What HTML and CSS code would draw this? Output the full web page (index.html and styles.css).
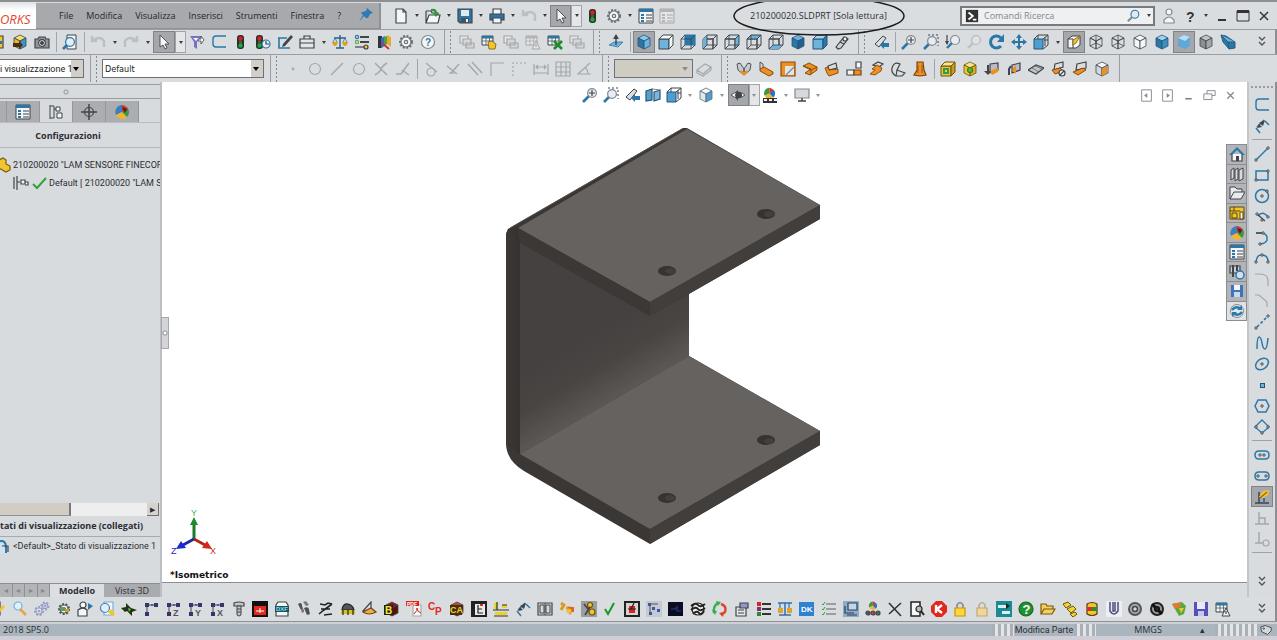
FILE: index.html
```
<!DOCTYPE html>
<html lang="it">
<head>
    <meta charset="UTF-8">
    <meta name="viewport" content="width=device-width, initial-scale=1.0">
    <title>210200020.SLDPRT</title>
    <link rel="stylesheet" href="styles.css">
</head>
<body>

    <!-- Title bar -->
    <header class="titlebar">
        <div class="logo">ORKS</div>
        <nav class="menu">
            <a href="#">File</a>
            <a href="#">Modifica</a>
            <a href="#">Visualizza</a>
            <a href="#">Inserisci</a>
            <a href="#">Strumenti</a>
            <a href="#">Finestra</a>
            <a href="#">?</a>
            <span class="tools" data-icons="pin"></span>
        </nav>
        <div class="tools quick" data-icons="new v open v save v print v undo- v cursor* v* lights gear v list list-"></div>
        <h1 class="doc-title">210200020.SLDPRT [Sola lettura]
            <svg class="doc-ring" viewBox="0 0 174 42"><ellipse cx="87" cy="21" rx="85" ry="19"/></svg>
        </h1>
        <div class="search">
            <svg viewBox="0 0 16 16"><path d="M1 1h14v14H1z" fill="#333"/><path d="M4 4l5 4-5 4M9 12h4" stroke="#fff" stroke-width="2" fill="none"/></svg>
            <input type="text" aria-label="Comandi Ricerca" placeholder="Comandi Ricerca">
            <div class="tools" data-icons="lens v"></div>
        </div>
        <div class="tools window" data-icons="person help2 v min max close"></div>
    </header>

    <!-- Standard and view toolbars -->
    <div class="toolbar">
        <div class="tools first" data-icons="part assembly camera | preview | undo- v redo- v cursor* v* filter sketch lights lights2 pen case v scale options colors gear help"></div>
        <div class="tools group" data-icons="stack- table stack- tablewarn- tablex stack-"></div>
        <div class="tools group" data-icons="normal | iso* vfront vback vleft vright vtop vbottom viso2 vfull wrench"></div>
        <div class="tools group" data-icons="prev | zoomfit zoomarea zoomdown lens- rotate pan cubeview v section* wire wire hidden shaded shaded2* edges persp"></div>
        <div class="tools more" data-icons="chev"></div>
    </div>

    <!-- Configuration, sketch relations and sheet metal toolbars -->
    <div class="toolbar lower">
        <div class="combo first-combo"><select aria-label="Stato di visualizzazione"><option>i visualizzazione 1</option></select></div>
        <div class="tools group"></div>
        <div class="combo config-combo"><select aria-label="Configurazione"><option>Default</option></select></div>
        <div class="tools group relations" data-icons="dot- circ- line- circ- cross- angle- | tangent- perp- para- corner- dots- dim- grid- tri-"></div>
        <div class="tools group"></div>
        <div class="combo off-combo"><select aria-label="Layer" disabled><option></option></select></div>
        <div class="tools" data-icons="eraser-"></div>
        <div class="tools group sheet" data-icons="sm1 sm2 sm3 sm4 sm5 sm6 sm7 sm8 sm9 | smg1 smg2 smd1 smd2 smflat smno smh smbox"></div>
    </div>

    <main class="workspace">
        <!-- Left panel -->
        <aside class="panel">
            <div class="panel-grip"></div>
            <div class="panel-tabs">
                <button class="cut" aria-label="Albero"></button>
                <button aria-label="Proprietà" data-icon="list"></button>
                <button class="active" aria-label="Configurazioni" data-icon="config"></button>
                <button aria-label="Quote" data-icon="target"></button>
                <button aria-label="Aspetti" data-icon="ball"></button>
            </div>
            <h2>Configurazioni</h2>
            <ul class="tree">
                <li><span data-icon="yellowpart"></span>210200020 "LAM SENSORE FINECORS</li>
                <li class="child"><span data-icon="confnode"></span><span data-icon="tick"></span>Default [ 210200020 "LAM S</li>
            </ul>
            <div class="scroll"><div class="thumb"></div><button aria-label="Avanti">▶</button></div>
            <h3>tati di visualizzazione (collegati)</h3>
            <p class="state"><span data-icon="stateicon"></span>&lt;Default&gt;_Stato di visualizzazione 1</p>
            <div class="sheets">
                <div class="pager"><i>◂</i><i>◂</i><i>▸</i><i>▸</i></div>
                <button class="active">Modello</button>
                <button>Viste 3D</button>
            </div>
        </aside>

        <!-- Graphics area -->
        <section class="view">
            <button class="handle" aria-label="Comprimi"></button>
            <div class="tools heads-up" data-icons="zoomfit zoomarea prev sectview cubeview v wirecube v eye* v* scene v monitor v"></div>
            <div class="tools doc-buttons" data-icons="dockl dockr min restore close"></div>

            <svg class="model" viewBox="0 0 350 450">
                <defs>
                    <linearGradient id="back" gradientUnits="userSpaceOnUse" x1="80" y1="235" x2="115" y2="295">
                        <stop offset="0" stop-color="#454140"/>
                        <stop offset="0.5" stop-color="#484543"/>
                        <stop offset="1" stop-color="#5b5856"/>
                    </linearGradient>
                    <linearGradient id="left" x1="0" x2="1">
                        <stop offset="0" stop-color="#3b3836"/>
                        <stop offset="1" stop-color="#34312f"/>
                    </linearGradient>
                </defs>
                <path d="M16 124l2-5L193 18l4 0 133 77v14l-131 75v62l131 75v14L160 434 34 361Q16 350 16 333z" fill="#3a3735"/>
                <path d="M30 130l130 76 39-22v62L30 344z" fill="url(#back)"/>
                <path d="M16 124l2-5 9-2 3 14v213l-14-9z" fill="url(#left)"/>
                <path d="M28 118L197 19l133 76-170 97z" fill="#65625f"/>
                <path d="M20 118L192 19" stroke="#56524f" fill="none"/>
                <path d="M28 118l132 74v14L30 133z" fill="#3c3836"/>
                <path d="M160 192L330 95v14l-170 97z" fill="#423e3c"/>
                <path d="M30 344l169-98 131 75-170 98z" fill="#65625f"/>
                <path d="M160 419l170-98v14l-170 99z" fill="#423e3c"/>
                <g fill="#37332f">
                    <ellipse cx="276" cy="104" rx="9" ry="5"/>
                    <ellipse cx="177" cy="161" rx="9" ry="5"/>
                    <ellipse cx="276" cy="330" rx="9" ry="5"/>
                    <ellipse cx="177" cy="388" rx="9" ry="5"/>
                </g>
                <g fill="#433f3c">
                    <ellipse cx="279" cy="104" rx="5" ry="3"/>
                    <ellipse cx="180" cy="161" rx="5" ry="3"/>
                    <ellipse cx="279" cy="331" rx="5" ry="3"/>
                    <ellipse cx="180" cy="388" rx="5" ry="3"/>
                </g>
            </svg>

            <div class="triad">
                <svg viewBox="0 0 50 48">
                    <path d="M24 30V14" stroke="#1c7a28" stroke-width="3"/>
                    <path d="M24 8l-4 8h8z" fill="#1f8a2c"/>
                    <path d="M24 30l-11 6" stroke="#1b2aa8" stroke-width="3"/>
                    <path d="M6 40l5-8 5 7z" fill="#1b2ad0"/>
                    <path d="M24 30l11 6" stroke="#b3261b" stroke-width="3"/>
                    <path d="M42 40l-5-8-5 7z" fill="#d0281b"/>
                    <text x="21" y="7" fill="#4fb055">Y</text>
                    <text x="1" y="45" fill="#1b2aa8">Z</text>
                    <text x="40" y="45" fill="#d0281b">X</text>
                </svg>
                <p>*Isometrico</p>
            </div>

            <div class="task-pane" data-icons="home library folder palette ball list forum floppy refresh"></div>
        </section>

        <!-- Sketch toolbar -->
        <aside class="tools sketchbar" data-icons="sketch smartdim | line2 rect circle2 slotarc arc arc3 fillet- fillet2- dashline spline ellipse point polygon diamond | slot slot2 snap* rel1- rel2- | chev"></aside>
    </main>

    <!-- Macro toolbar -->
    <div class="toolbar macros">
        <div class="tools" data-icons="docpen magpen gears gears2 man docmag plane3 axis axisz axisy axisx screw redbox dxf feet tools2 hat disk bbox pdf cp cbox tree2 yline smartdim book arrowy chain check redchip nodes screen zebra recycle props rgblist scale2 dk checklist pc molecule xbig docfind stop lock lock2 teal qgreen folder2 yblocks barrel uclip ring ring2 shield floppy2 tablewarn"></div>
        <div class="tools more" data-icons="chev"></div>
    </div>

    <footer class="status">
        <span class="version">2018 SP5.0</span>
        <span class="ridge"></span>
        <span class="mode">Modifica Parte</span>
        <span class="ridge"></span>
        <span class="units">MMGS</span>
        <span class="up">▴</span>
        <span class="ridge wide"></span>
        <span data-icon="tag"></span>
    </footer>

    <script src="toolbars.js"></script>
</body>
</html>
```

FILE: styles.css
```
/* General Styles */
* {
    box-sizing: border-box;
}

body {
    margin: 0;
    height: 100vh;
    display: flex;
    flex-direction: column;
    overflow: hidden;
    font-family: "Open Sans", "Noto Sans", sans-serif;
    font-size: 9px;
    color: #2c2e33;
    background: #dadde0;
    border-top: 2px solid #8e8f93;
}

button {
    font: inherit;
    color: inherit;
    border: 0;
    padding: 0;
    background: none;
}

h1, h2, h3, p, ul {
    margin: 0;
    padding: 0;
    font-size: inherit;
    font-weight: normal;
    list-style: none;
}

svg {
    display: block;
    width: 16px;
    height: 16px;
}

/* Icon groups */
.tools {
    display: flex;
    align-items: center;
    flex: none;
}

.tool {
    width: 22px;
    height: 22px;
    flex: none;
    display: flex;
    align-items: center;
    justify-content: center;
}

.tool.pressed {
    background: #a5a7aa;
    border: 1px solid #808286;
}

.tool.off {
    opacity: 0.35;
    filter: grayscale(1);
}

.drop {
    width: 11px;
    height: 22px;
    display: flex;
    align-items: center;
    justify-content: center;
}

.drop::before {
    content: "";
    border: 2px solid transparent;
    border-top: 3px solid #3a3c40;
    border-bottom: 0;
}

.drop.pressed {
    border: 1px solid #a2a4a8;
    background: #e4e6e8;
}

.sep {
    width: 6px;
    height: 20px;
    background: linear-gradient(#a3a5a8, #a3a5a8) center / 1px 100% no-repeat;
}

/* Title bar */
.titlebar {
    display: flex;
    align-items: center;
    height: 27px;
    flex: none;
}

.logo {
    width: 36px;
    height: 27px;
    flex: none;
    display: flex;
    align-items: center;
    padding-top: 6px;
    background: linear-gradient(#dfe1e3, #fff 30%);
    color: #e2452f;
    font-size: 13px;
    font-style: italic;
}

.menu {
    display: flex;
    align-items: center;
    gap: 13px;
    width: 345px;
    height: 26px;
    flex: none;
    padding-left: 23px;
    background: #a8a9ad;
    border-right: 2px solid #8f9094;
    border-bottom: 1px solid #909195;
}

.menu a {
    color: #25262b;
    text-decoration: none;
}

.menu .tools {
    margin-left: auto;
    padding-right: 2px;
}

.quick {
    margin-left: 9px;
}

.quick .tool {
    width: 21px;
}

.doc-title {
    position: relative;
    margin: 0 auto;
}

.doc-ring {
    position: absolute;
    left: 50%;
    top: 50%;
    width: 174px;
    height: 42px;
    transform: translate(-50%, -50%);
    fill: none;
    stroke: #1c1c1e;
    stroke-width: 1.5px;
    z-index: 5;
}

.search {
    display: flex;
    align-items: center;
    width: 195px;
    height: 20px;
    flex: none;
    padding-left: 3px;
    background: #eef0f1;
    border: 2px solid #77797d;
}

.search svg {
    width: 14px;
    height: 14px;
}

.search input {
    flex: 1;
    min-width: 0;
    border: 0;
    padding: 0 5px;
    background: none;
    font: inherit;
    outline: none;
}

.search input::placeholder {
    color: #85878b;
}

.search .drop {
    width: 8px;
}

.window {
    padding: 0 3px;
}

.window .tool {
    width: 21px;
}

/* Toolbars */
.toolbar {
    display: flex;
    align-items: center;
    height: 25px;
    flex: none;
    border-top: 1px solid #9b9da1;
    border-right: 2px solid #8c8e93;
}

.toolbar .first {
    margin-left: -13px;
}

.group {
    height: 100%;
    border-left: 1px solid #9b9da1;
    margin-left: 5px;
    padding-left: 11px;
    background: radial-gradient(circle, #85878c 1px, transparent 1px) 4px 0 / 3px 4px repeat-y;
}

.more {
    margin-left: auto;
    padding-right: 2px;
}

.lower {
    height: 28px;
    border-right: 0;
}

.lower .group {
    margin-left: 6px;
}

.lower .sheet {
    border-right: 1px solid #9b9da1;
    padding-right: 6px;
}

.combo {
    position: relative;
    height: 19px;
    flex: none;
    border: 1px solid #6e7074;
    background: #fff;
}

.combo::after {
    content: "";
    position: absolute;
    right: 4px;
    top: 7px;
    border: 3px solid transparent;
    border-top: 4px solid #000;
    border-bottom: 0;
}

.combo select {
    appearance: none;
    width: 100%;
    height: 17px;
    border: 0;
    border-radius: 0;
    padding: 0 14px 0 2px;
    font-family: "DejaVu Sans Condensed", "DejaVu Sans", sans-serif;
    font-size: 9px;
    color: #222;
    background: linear-gradient(#d2cfc8, #d2cfc8) right / 12px 100% no-repeat #fff;
}

.first-combo {
    width: 84px;
    border-left: 0;
}

.first-combo select {
    padding: 0 12px 0 0;
    font-family: Roboto, sans-serif;
}

.config-combo {
    width: 162px;
}

.off-combo {
    width: 79px;
}

.combo select:disabled {
    background-color: #cfccc2;
    opacity: 1;
}

.off-combo::after {
    border-top-color: #8f8d87;
}

/* Workspace */
.workspace {
    flex: 1;
    min-height: 0;
    display: flex;
}

.panel {
    width: 162px;
    flex: none;
    display: flex;
    flex-direction: column;
    overflow: hidden;
    white-space: nowrap;
    border-right: 2px solid #bcbec2;
    background: #d8dbde;
}

.panel-grip {
    height: 15px;
    flex: none;
    margin-top: 2px;
    border-top: 1px solid #999b9f;
    border-bottom: 1px solid #999b9f;
    background: radial-gradient(circle, #d8dbde 1px, #97999d 2px, transparent 3px) 62px 3px / 8px 8px no-repeat;
}

.panel-tabs {
    display: flex;
    margin-top: 2px;
    border-bottom: 1px solid #b9bbbe;
}

.panel-tabs button {
    width: 33px;
    height: 21px;
    display: flex;
    align-items: center;
    justify-content: center;
    background: #abadb0;
    border-right: 1px solid #95979a;
}

.panel-tabs .cut {
    width: 7px;
}

.panel-tabs .active {
    background: #d8dbde;
}

.panel h2 {
    padding: 6px 24px 5px 0;
    text-align: center;
    font-weight: bold;
    line-height: 13px;
    border-bottom: 1px solid #b5b7bb;
}

.tree {
    flex: 1;
    padding-top: 8px;
    font-family: Roboto, sans-serif;
}

.tree li {
    display: flex;
    align-items: center;
    height: 18px;
    gap: 2px;
    margin-left: -5px;
}

.tree .child {
    margin-left: 13px;
}

.tree svg {
    flex: none;
}

.scroll {
    display: flex;
    align-items: stretch;
    height: 13px;
    flex: none;
    width: 159px;
    background: #eeeeee;
}

.thumb {
    width: 71px;
    background: #d1cdc3;
    border-right: 2px solid #77797c;
    border-bottom: 1px solid #8f9194;
}

.scroll button {
    width: 12px;
    margin-left: auto;
    font-size: 7px;
    background: #d6d3cb;
    border-right: 1px solid #6f7175;
    border-bottom: 1px solid #6f7175;
}

.panel h3 {
    font-weight: bold;
    line-height: 20px;
    border-bottom: 1px solid #a8aaae;
}

.state {
    display: flex;
    align-items: center;
    gap: 4px;
    height: 46px;
    margin-left: -7px;
    padding-bottom: 28px;
    flex: none;
    font-family: Roboto, sans-serif;
}

.state svg {
    flex: none;
}

.sheets {
    display: flex;
    height: 14px;
    flex: none;
    border-top: 1px solid #8c8e92;
}

.sheets button {
    width: 56px;
    line-height: 11px;
    background: #a9abaf;
}

.sheets .active {
    width: 54px;
    font-weight: bold;
    background: #dcdfe1;
}

.pager {
    display: flex;
    width: 50px;
    background: #b2b4b7;
    color: #85878a;
    font-size: 8px;
    line-height: 11px;
}

.pager i {
    width: 13px;
    text-align: center;
    font-style: normal;
    border-right: 1px solid #8f9194;
}

/* Graphics area */
.view {
    position: relative;
    flex: 1;
    min-width: 0;
    background: #fff;
    border-bottom: 14px solid #dadde0;
}

.view::after {
    content: "";
    position: absolute;
    left: 0;
    right: 0;
    bottom: 0;
    border-bottom: 1px solid #8c8e92;
}

.handle {
    position: absolute;
    left: -1px;
    top: 235px;
    width: 8px;
    height: 32px;
    background: radial-gradient(circle, #fff 1px, #8e9094 2px, #d3d5d8 3px);
    border: 1px solid #a5a7aa;
}

.heads-up {
    justify-content: center;
    height: 26px;
    padding-right: 6px;
}

.heads-up .tool {
    width: 21px;
}

.heads-up .drop::before {
    border-top-color: #8f9195;
}

.doc-buttons {
    position: absolute;
    right: 6px;
    top: 2px;
    opacity: 0.6;
}

.doc-buttons .tool {
    width: 21px;
}

.doc-buttons svg {
    width: 13px;
    height: 13px;
}

.model {
    position: absolute;
    left: 328px;
    top: 28px;
    width: 350px;
    height: 450px;
}

.triad {
    position: absolute;
    left: 8px;
    bottom: 0;
    color: #111;
}

.triad svg {
    width: 50px;
    height: 48px;
    font: 9px "Liberation Sans", sans-serif;
}

.triad p {
    margin-top: 10px;
    font-family: "DejaVu Sans", sans-serif;
    font-size: 9px;
    font-weight: bold;
    line-height: 16px;
}

.task-pane {
    position: absolute;
    right: 0;
    top: 62px;
    display: flex;
    flex-direction: column;
    width: 21px;
    height: 177px;
    background: #b2b4b7;
    border: 1px solid #8b8d91;
}

.task-pane .tool {
    flex: 1;
    width: 19px;
    height: 0;
    border-bottom: 1px solid #8b8d91;
}

.task-pane .tool:last-child {
    background: #dfe1e3;
    border-bottom: 0;
}

/* Sketch toolbar */
.sketchbar {
    width: 30px;
    flex-direction: column;
    padding-top: 4px;
    border-left: 2px solid #c3c6c9;
    border-right: 2px solid #8c8e93;
    background: #d9dcdf;
}

.sketchbar::before {
    content: "";
    width: 22px;
    margin-bottom: 6px;
    border-top: 2px dotted #9a9ca0;
}

.sketchbar .tool {
    height: 21px;
}

.sketchbar .sep {
    width: 20px;
    height: 7px;
    flex: none;
    background: linear-gradient(#9fa1a5, #9fa1a5) center / 100% 1px no-repeat;
}

.sketchbar .tool:last-child {
    margin-top: 15px;
}

/* Macro toolbar */
.macros {
    border-top: 0;
    border-bottom: 1px solid #8f9195;
}

.macros .tools:first-child {
    flex: 1;
    margin: 0 17px 0 -13px;
}

.macros .tools:first-child .tool {
    flex: 1 1 0;
    width: 0;
}

/* Status bar */
.status {
    display: flex;
    align-items: center;
    height: 18px;
    flex: none;
    background: #abb5be;
    border-top: 2px solid #cdd1d5;
    border-bottom: 4px solid #cfced7;
}

.status span {
    line-height: 12px;
}

.version {
    padding-left: 3px;
    margin-right: auto;
}

.mode {
    width: 60px;
    font-family: Roboto, sans-serif;
    text-align: center;
    white-space: nowrap;
}

.units {
    width: 104px;
    text-align: center;
}

.up {
    width: 15px;
}

.ridge {
    width: 22px;
    height: 12px;
    background: repeating-linear-gradient(90deg, #a9b0b8 0 3px, #e4e5e7 3px 6px);
}

.ridge.wide {
    width: 42px;
}

.status svg {
    width: 14px;
    height: 12px;
    margin: 0 4px 0 2px;
}
```

FILE: toolbars.js
```
const K = "#3f454b";
const G = "#85898e";
const B = "#2b77a8";
const L = "#6db3dc";
const O = "#ee8f22";
const Y = "#f2c52e";
const W = "#f4f6f7";

// Small drawing helpers, all on a 16 x 16 grid
const s = (d, color = K, fill = "none", w = 1.2) =>
    `<path d="${d}" stroke="${color}" fill="${fill}" stroke-width="${w}"/>`;
const f = (d, fill) => `<path d="${d}" fill="${fill}"/>`;
const c = (x, y, r, color, fill = "none", w = 1.2) =>
    `<circle cx="${x}" cy="${y}" r="${r}" stroke="${color}" fill="${fill}" stroke-width="${w}"/>`;
const t = (text, x, y, size, color) =>
    `<text x="${x}" y="${y}" font-size="${size}" font-weight="bold" font-family="Liberation Sans, sans-serif" fill="${color}">${text}</text>`;
const node = (x, y) => s(`M${x - 1} ${y - 1}h2v2h-2z`, K, W, 0.9);

const front = "M1 5h10v10H1z";
const topf = "M1 5l4-4h10l-4 4z";
const side = "M11 5l4-4v10l-4 4z";
const cube = (a, b, d, line = K) => s(front, line, a, 1) + s(topf, line, b, 1) + s(side, line, d, 1);
const iso = (a, b, d, line = K) =>
    s("M8 1l6 3-6 3-6-3z", line, b, 0.8) + s("M2 4l6 3v8l-6-3z", line, a, 0.8) + s("M14 4L8 7v8l6-3z", line, d, 0.8);
const frame = s("M5 1v10h10M5 11l-4 4", K, "none", 0.9);
const lens = (x, y, color = G) => s(`M${x - 3} ${y + 3}L1 15`, B, "none", 2.6) + c(x, y, 4.4, color, "#e6eef3");
const table = s("M1 2h11v9H1z", K, W, 1) + f("M1 2h11v2.500H1z", B) + s("M1 7h11M5 4v7M8.500 4v7", K, "none", 0.7);
const gearAt = (x, y, r, color) =>
    `<circle cx="${x}" cy="${y}" r="${r + 1}" fill="none" stroke="${color}" stroke-width="2" stroke-dasharray="2 1.500"/>` + c(x, y, r, color, W) + c(x, y, r / 3, color);
const axis = s("M4 13V4h9", K, "none", 1) + f("M2 2h4v4H2zM11 2h4v4h-4zM2 11h4v4H2z", "#38356a") + f("M8 3h2v2H8z", "#4466aa");
const lightsBase = `<rect x="4" y="1" width="7" height="14" rx="3" fill="#263029"/>` + c(7.5, 4.5, 1.6, "#d22", "#d22") + c(7.5, 8, 1.2, "#554", "#554") + c(7.5, 11.5, 1.6, "#2a4", "#2a4");
const book = (color) => s("M1 2h14v12H1z", K, color);
const ball = f("M8 8V1a7 7 0 0 0-6 10z", "#3a9a44") + f("M8 8L2 11a7 7 0 0 0 11 2z", "#f0b62c") + f("M8 8l5 5a7 7 0 0 0 0-10z", "#2d6fc0") + f("M8 8V1a7 7 0 0 1 5 3z", "#d8342a");
const redball = f("M8 8V1a7 7 0 0 0-6 10z", "#3a7fc4") + f("M8 8L2 11a7 7 0 0 0 11 2z", "#f0b62c") + f("M8 8l5 5a7 7 0 0 0 0-10z", "#3a9a44") + f("M8 8V1a7 7 0 0 1 6 5z", "#d8342a") + f("M8 3l5 2-2 4z", "#4a2320");

const icons = {
    new: s("M3 1h7l3 3v11H3z", K, W) + s("M10 1v3h3"),
    open: s("M1 3h5l1 2h6v3", K, W) + s("M1 3v12l3-8h11l-2 8H1z", K, W) + f("M6 1q6-1 6 4h2l-3 4-3-4h2q0-2-4-2z", "#2c9c35"),
    save: s("M1 1h14v14H3l-2-2z", K, B) + f("M4 2h8v6H4z", "#dce9f1") + f("M4 10h8v5H4z", "#4a5057") + f("M9 11h2v3H9z", W),
    print: s("M4 6V1h8v5", K, W) + s("M1 6h14v6H1z", K, B) + s("M4 10h8v5H4z", K, W),
    undo: s("M2 2v5h5M2 7q8-6 12 0v6", G, "none", 2.4),
    redo: s("M14 2v5H9M14 7Q6 1 2 7v6", G, "none", 2.4),
    cursor: s("M4 1v12l3-2 2 4 2-1-2-4h4z", K, W, 0.9),
    lights: lightsBase,
    lights2: `<g transform="translate(-3)">${lightsBase}</g>` + c(11, 10, 4, B, "#e8eef2") + s("M11 7v3h3", K),
    gear: gearAt(8, 8, 5, "#6d7176"),
    list: s("M1 1h14v14H1z", K, W, 1) + f("M1 1h14v3H1zM3 6h3v2H3zM3 9h3v2H3zM3 12h3v2H3z", B) + s("M8 7h6M8 10h6M8 13h6", K, "none", 1),
    pin: f("M9 1l6 5-3 1-2 4-2 0-2-2-5 6 4-7-2-2 1-1 4-1z", "#2f79b5"),
    lens: c(9, 6, 4.5, B, "#dfe9ef") + s("M6 9l-5 5", G, "none", 2.4),
    person: c(8, 4, 3, G, W) + s("M3 15v-3q5-6 10 0v3z", G, W),
    help2: t("?", 4, 14, 14, "#333"),
    min: f("M4 11h8v2H4z", "#333"),
    max: s("M2 3h12v10H2z", "#333", "none", 1) + f("M2 2h12v3H2z", "#333"),
    close: s("M4 4l8 8M12 4l-8 8", "#333", "none", 1.5),
    chev: s("M5 3l3 3 3-3M5 8l3 3 3-3", "#555", "none", 1.4),

    part: s("M5 2h8v12H5z", K, Y) + f("M6 7h6v3H6z", B),
    assembly: iso("#e9b62c", "#f6df74", "#3f93c8") + f("M1 9h6V7l4 4-4 4v-2H1z", "#4b3010"),
    camera: s("M1 5h3l1-2h6l1 2h3v9H1z", K, "#90959a") + c(8, 9, 3.3, K, W) + c(8, 9, 1.4, K, K),
    preview: s("M5 1h9v14H5z", K, W, 1) + lens(8, 8, B),
    filter: f("M1 2h12l-5 6v7l-3-2V8z", "#7a71c4") + f("M4 4h6L7 7z", W) + s("M9 5h3V2l3 4-3 4V7H9z", K, W, 0.8),
    sketch: s("M15 2H5Q2 2 2 5v5q0 3 3 3h10", B, "none", 1.4),
    pen: s("M1 4h9M2 4v10h11", B, "none", 1.6) + f("M14 1l2 2-8 9-3 1 1-3z", K),
    case: s("M1 5h14v9H1z", K, "#e4e5e6") + s("M5 5V2h6v3M1 9h14"),
    scale: s("M8 1v13M4 14h8M2 4h12", "#2f5f85", "none", 1.4) + f("M0 8h6q-1 4-3 4T0 8zM10 8h6q-1 4-3 4t-3-4z", "#d8a325") + s("M3 4L1 8M3 4l2 4M13 4l-2 4M13 4l2 4", B, "none", 0.8),
    options: s("M6 3h9M6 8h9", K, "none", 2) + c(3, 3, 1.6, B) + c(3, 8, 1.6, "#6a4") + s("M1 13h9", K) + c(12, 13, 2, K, Y),
    colors: f("M2 2h4v12H2z", "#333") + f("M5 4l4-2v10l-4 2z", "#2d6fc0") + f("M8 3l3-1v8l-3 2z", "#48a63e") + f("M11 1l4 2v10l-4-3z", "#e8a92c") + s("M6 9l7 6", "#c33", "none", 2),
    help: c(8, 8, 6.5, G, W) + t("?", 5, 12, 10, B),

    stack: s("M1 2h8v7H1z", K, W) + s("M4 5h8v6H4zM7 9h8v5H7z", K, "#ccc"),
    table: table + f("M7 8l4-1 4 3-1 5H8z", Y) + s("M7 8l4-1 4 3-1 5H8z", "#7a5a10", "none", 0.8),
    tablewarn: table + s("M11 7l4 8H7z", K, W, 1) + s("M11 10v3", K),
    tablex: table + s("M7 7l8 8M15 7l-8 8", "#1e8a2c", "none", 2.6),
    normal: f("M1 11l5-3h9l-5 5z", L) + s("M1 11l5-3h9l-5 5z", B, "none", 0.8) + s("M8 11V2", K, "none", 1.4) + f("M5 5l3-5 3 5z", K),
    iso: iso(B, "#8ccaea", L, "#24557a"),
    vfront: cube(L, W, W),
    vback: s("M5 1h10v10H5z", B, B) + s("M1 5h10v10H1zM1 5l4-4M11 5l4-4M11 15l4-4M1 15l4-4", K, "none", 0.9),
    vleft: cube("none", "none", "none") + f("M1 5l4-4v10l-4 4z", L) + frame,
    vright: cube("none", "none", L) + frame,
    vtop: cube("none", L, "none") + frame,
    vbottom: cube("none", "none", "none") + f("M1 15l4-4h10l-4 4z", L) + frame,
    viso2: iso(B, L, "#25608c", "#24557a"),
    vfull: cube(L, "#a6d4ec", B, "#24557a"),
    wrench: s("M2 13l8-10 4 2-7 9-3 1z", K, "#d0d3d5") + s("M6 8l4 2", K) + c(11, 5, 2, K, W),
    prev: s("M2 10l8-8 3 2-7 9z", K, "#dadcdd", 1) + f("M7 11l4-4v2h5v4h-5v2z", B),
    zoomfit: lens(10, 6) + s("M10 3v6M7 6h6", K, "none", 1.2),
    zoomarea: lens(9, 7) + s("M5 1h10v11", K, "none", 1).replace("/>", ` stroke-dasharray="2 2"/>`),
    zoomdown: c(10, 6, 4.5, G, "#e6eef3") + s("M7 9l-5 5", B, "none", 2.4) + s("M2 1v9", K) + f("M0 7h4l-2 4z", K),
    rotate: s("M12 12A6 6 0 1 1 12 4", B, "none", 3) + f("M15 0v8H8z", B),
    pan: f("M8 0l3 4H9v3h3V5l4 3-4 3V9H9v3h2l-3 4-3-4h2V9H4v2L0 8l4-3v2h3V4H5z", B),
    cubeview: s("M1 5h9v10H1z", "#24557a", "#4d9fce", 1) + s("M1 5l4-4h10v10l-5 4M10 5l5-4M5 1v4M11 6h4M12 3v9", K, "none", 1),
    section: s("M2 5l4-3h8v9l-4 3H2z", K, W, 1) + s("M2 5h5v9", K, "none", 1) + s("M7 6l7-4-4 7-3 2z", "#8a6416", Y, 0.9),
    wire: iso("none", "none", "none") + s("M8 1v8M2 12l6-3 6 3", K, "none", 0.8),
    hidden: iso(W, W, W),
    shaded: iso(B, "#9fd2ec", "#3e8fbd", "#24557a"),
    shaded2: f("M2 4l6-3 6 2v9l-5 3-7-3z", "#5fa9d8") + f("M2 4l6-3 6 2-5 4z", "#b8dcf0"),
    edges: iso("#8b8f94", "#c2c5c8", "#a2a6aa"),
    persp: s("M1 1l5 1 9 6v6l-6 1L3 8z", "#24557a", B, 0.9) + s("M1 1l7 7 7 0M8 8l1 7", "#24557a", L, 0.9),

    dot: c(8, 8, 0.8, K, K),
    circ: c(8, 8, 5.500, K),
    line: s("M2 14L14 2", K, "none", 1.5),
    cross: s("M2 2l12 12M14 2Q9 5 8 8T2 14", K, "none", 1.500),
    angle: s("M1 13h5L14 2M7 9l7 5", K, "none", 1.500),
    tangent: c(8, 11, 4, K) + s("M3 2l11 9", K),
    perp: s("M2 5l10 8M14 3L6 12", K, "none", 1.500) + s("M4 12h5", K),
    para: s("M1 3l10 11M5 1l10 11", K, "none", 1.500),
    corner: s("M2 15V2h13", K),
    dots: s("M2 15V2h13", K).replace("/>", ` stroke-dasharray="2 2"/>`),
    dim: s("M1 3v11M15 3v11M1 12h14M3 6h10M5 4L3 6l2 2M11 4l2 2-2 2", K),
    grid: s("M1 1h14v14H1zM1 6h14M1 11h14M6 1v14M11 1v14", K),
    tri: s("M14 13H1L13 2M8 6q3 3 3 7", K),
    eraser: s("M1 9l8-6 6 3-8 7zM1 9v3l6 3 8-6V6", K, "#ddd"),

    sm1: s("M1 3l3-1 4 6v6L2 9zM15 3l-3-1-4 6v6l6-5z", K, "#c9ccce", 0.9) + f("M5 9l3 2 3-2v3l-3 3-3-3z", O),
    sm2: s("M2 1l3 2v7l-3-2z", K, "#ddd", 0.9) + s("M2 8l4-2 9 5v2l-4 2-9-5z", "#7a430c", O, 0.9),
    sm3: s("M1 1h14v14H1z", "#8c4d10", O) + f("M5 5h9v9H5z", "#dfe5e8") + s("M6 14L14 6", G),
    sm4: s("M1 5l6-3 8 4v3l-7 5-5-2 6-4z", "#7a430c", O, 0.9) + s("M1 5l8 4 6-3M9 9v4", "#7a430c", "none", 0.9),
    sm5: s("M4 5l8-3 1 5-8 2z", K, "#d8dadc") + s("M1 7l3-1 1 3 9-1v4l-9 3-2-3z", "#7a430c", O, 0.9),
    sm6: s("M10 1h5v6h-5zM1 9h7v5H1z", K, W) + s("M8 9h7v5H8z", "#7a430c", O),
    sm7: s("M5 4l5-3 5 2-4 3z", K, "#ddd") + s("M4 8l5-4 5 3-1 3-6 4-5-1 5-4z", "#7a430c", O, 0.8),
    sm8: s("M2 7Q4 0 10 3l-3 6 8 3-3 3H6Q1 12 2 7z", K, "#dcdedf") + s("M7 9l-1 6", K),
    sm9: s("M5 1h6l1 8 2 5-6 1-6-1 3-5z", "#7a430c", O) + s("M6 4v8M10 4v8", "#a35d10"),
    smg1: cube(Y, "#f9e48c", "#c89a1a", "#6a5210") + f("M3 7h6v6H3z", "#3a9a44") + f("M5 9h2v2H5z", "#b9e08a"),
    smg2: iso(Y, "#f9e48c", "#d9ab25", "#6a5210") + c(8, 9, 2.500, "#3a7a1f", "#5fb93c"),
    smd1: s("M6 3l8-1v7l-8 3z", K, "#b9bcc0") + f("M6 10l8-3v4l-6 3z", O) + f("M3 4h2v6h2l-3 4-4-4h3z", K),
    smd2: s("M6 4l8-2v7l-8 3z", K, "#b9bcc0") + f("M6 9l4-5v9z", O) + s("M3 14V8l2-3", K, "none", 2),
    smflat: s("M0 9l8-5 8 3-8 6z", K, "#c4c7ca") + s("M4 7l7 4M7 5l7 3", K, "none", 0.6),
    smno: s("M5 3l8-2v5L4 9z", K, "#ddd") + s("M2 9l8-2 3 3-8 3z", "#7a430c", O, 0.9) + c(12, 12, 3, K, W) + s("M10 14l4-4"),
    smh: s("M5 3l9-2v6L4 9z", K, "#ddd") + s("M1 11l10-4 3 2-8 5z", "#7a430c", O, 0.9),
    smbox: iso("#d5d7d9", W, "#d5d7d9") + f("M8 8l5-3v7l-5 3z", O),

    config: s("M2 1v14M2 2h4v12H2M6 5h3", K, "none", 1) + s("M8 3h4v4H8zM9 9h5v5H9z", K, W, 1),
    target: c(8, 8, 4.500, K) + s("M8 0v16M0 8h16", K, "none", 1.5),
    ball: redball,
    yellowpart: s("M4 3l4-2 3 2v4l4 2v4l-4 2-7-4z", "#7a5a10", Y),
    confnode: s("M4 1v14M1 2v12M4 7h3", K) + s("M8 5h4v4H8zM12 7h3v3h-3", K, W),
    tick: s("M2 9l4 4 9-10", "#35a03b", "none", 2),
    stateicon: s("M3 15Q2 4 8 3t5 12", B, "#cfe3ee", 2) + s("M9 8h6v6", K),

    sectview: s("M1 4l6-2v11l-6 1z", "#24557a", "#5a9fca") + s("M9 5l6-2v9l-6 2z", "#24557a", "#7fb6d6") + s("M7 2l8 1", G),
    wirecube: iso("#dfeaf0", W, "#4d9fce", "#5a6a75"),
    eye: s("M1 8q7-6 14 0-7 6-14 0z", "#55595e", W, 1) + f("M8 3v11q-3-3-3-6t3-5z", K) + c(9, 8, 2.500, K, K),
    scene: `<g transform="translate(1) scale(.8)">${ball}</g>` + f("M1 11h14v5H1z", "#333") + f("M2 12h3v2H2zM7 12h3v2H7zM12 12h3v2h-3z", W),
    monitor: s("M1 2h14v9H1z", G, "#d6dade") + s("M8 11v3M4 14h8", K, "none", 1.500),
    dockl: s("M2 1h12v14H2z", K) + f("M5 8l4-3v6z", K),
    dockr: s("M2 1h12v14H2z", K) + f("M11 8L7 5v6z", K),
    restore: s("M5 2h10v6H5z", K) + s("M1 6h10v7H1z", K, W),

    home: s("M3 8v7h10V8", K, W) + f("M8 1L0 9h3l5-5 5 5h3z", B) + f("M7 10h3v5H7z", K),
    library: s("M2 4l3-2v10l-3 2zM6 4l3-2v11l-3 2zM10 4l4-2v11l-4 2z", K, "#d8dadc", 1),
    folder: s("M1 14V2h5l2 2h5v3M1 14L5 7h11l-4 7z", K, "#e9eaeb", 1),
    palette: s("M1 2h14v12H1z", "#5a4310", Y, 1) + s("M1 6h10M3 8h5v5H3zM5 2v4", "#5a4310", "none", 1) + s("M11 7h3v7h-3z", "#5a4310", W, 1),
    forum: s("M1 2h10v7H1z", K, "#c9ccce") + s("M4 1v12M8 1v6", K, "none", 2) + c(11, 11, 4, B, "#cfe3ee", 1.500),
    floppy: f("M2 2h12v12H2z", "#3f74bd") + f("M5 2h6v5H5z", W) + f("M5 9h6v5H5z", "#c9d8ec"),
    refresh: c(8, 8, 6.500, G, "#dfe9ef", 1) + s("M3 7q4-5 9-1M13 9q-4 5-9 1", B, "none", 2.500) + f("M13 2v5H8zM3 14V9h5z", B),

    smartdim: s("M3 9L10 2M6 15l-4-5M15 7l-4-4", B, "none", 1.500) + f("M5 5l6-3-2 6z", K) + f("M3 10l5-1-3-3z", K),
    line2: s("M2 14L14 2", B, "none", 1.5) + node(2, 14) + node(14, 2),
    rect: s("M2 4h12v9H2z", B, "none", 1.5) + node(2, 13) + node(14, 4),
    circle2: c(8, 8, 6.500, B, "none", 1.5) + node(8, 8) + node(13, 3),
    slotarc: s("M4 7q5-6 10 1", B, "none", 1.5) + s("M3 5l8 7", K) + node(3, 5) + node(14, 8) + node(8, 11),
    arc: s("M2 3h6q6 1 5 7-1 3-6 4", B, "none", 1.5) + s("M2 3h6", K) + node(9, 3) + node(6, 14),
    arc3: s("M2 11Q3 3 8 4q6 0 6 7", B, "none", 1.5) + node(2, 11) + node(14, 11) + node(8, 4),
    fillet: s("M1 2h5q8 0 8 7v5"),
    fillet2: s("M1 2h4l8 7v5"),
    dashline: s("M3 13L13 3", B, "none", 1.6).replace("/>", ` stroke-dasharray="3 2"/>`) + node(2, 14) + node(14, 2),
    spline: s("M3 14Q3 2 5 2t3 6 3 6 3-11", B, "none", 1.5),
    ellipse: `<ellipse cx="8" cy="8" rx="7" ry="5" transform="rotate(-35 8 8)" fill="none" stroke="${B}" stroke-width="1.500"/>` + node(8, 8),
    point: f("M6 6h5v5H6z", "#24557a") + f("M7 7h3v3H7z", L),
    polygon: s("M4 2h8l3 6-3 6H4L1 8z", B, "none", 1.5) + node(8, 8),
    diamond: s("M8 1l7 7-7 6-7-6z", B, "none", 1.3) + node(2, 8) + node(14, 8) + node(8, 14),
    slot: s("M5 4h6q4 0 4 4t-4 4H5Q1 12 1 8t4-4z", B, "none", 1.5) + node(6, 8) + node(10, 8),
    slot2: s("M5 4h6q4 0 4 4t-4 4H5Q1 12 1 8t4-4z", B, "none", 1.5) + node(4, 8) + node(12, 8),
    snap: s("M1 14h14M5 14V3", K, "none", 1.5) + f("M5 8l4-6 6-1-1 5-5 3z", Y) + s("M6 9l7-6", "#a35d10") + f("M9 9h2v5H9z", "#2d6fc0"),
    rel1: s("M1 14h14M5 14V2M5 8h6v6", K, "none", 1.5),
    rel2: s("M1 12h8M5 12V1", K, "none", 1.5) + c(12, 12, 3, K),

    docpen: s("M1 1h9v13H1z", K, W) + f("M5 12l8-8 2 2-8 8z", Y),
    magpen: c(6, 5, 4, L, "#dff0f8") + s("M8 8l6 6", "#e3a64e", "none", 2.6),
    gears: gearAt(5, 10, 3, "#9a9fc4") + gearAt(11, 5, 2.500, "#9a9fc4"),
    gears2: gearAt(8, 8, 4, "#555") + f("M5 6h4v4H5z", "#58a35c") + f("M9 8h4v3H9z", "#c9a02e"),
    man: c(6, 4, 3, K, W) + s("M1 15V9q5-4 9 0v6z", K, W) + f("M11 2l5 3-5 4z", B),
    docmag: s("M5 1h9v13H5z", L, W) + c(6, 7, 4.500, "#447eb5", "#dff0f8") + f("M9 11l4-3 3 5-3 2z", Y),
    plane3: f("M0 7l5-1 0-4 5 5 6 2-5 2 0 4-5-5-2 1z", "#1f3418") + f("M7 7l3 1-2 3z", "#6fbf3c"),
    axis: axis,
    axisz: axis + t("Z", 8, 15, 9, "#555"),
    axisy: axis + t("Y", 8, 15, 9, "#555"),
    axisx: axis + t("X", 8, 15, 9, "#555"),
    screw: s("M3 2q5-2 10 0v3H3z", K, "#c5c8cb") + s("M6 5h4v9l-2 1-2-1zM6 8h4M6 11h4", K, "#c5c8cb", 1),
    redbox: f("M0 0h16v16H0z", "#111") + f("M2 5h12v9H2z", "#e12a20") + s("M4 10h8M8 7v5", "#fff", "none", 1),
    dxf: s("M4 1h8l2 3v11H2V4z", K, W) + f("M1 5h14v6H1z", "#1d4f63") + t("DXF", 2, 10, 6, "#7fe3ef"),
    feet: f("M2 3q4-3 4 2l1 3-2 1zM8 7q5-2 5 2l1 4-3 1z", "#4d5054") + f("M5 9l3-1 0 3-2 1zM7 1l3-1 3 4-3 1z", "#77797d"),
    tools2: s("M2 3l5 1 3-2 4 1M3 8h9M1 13l5-4 8-6M6 14l8-1", "#222", "none", 1.6),
    hat: s("M2 9Q3 2 8 3t6 6z", "#222", "#555") + f("M1 9h14v4H1z", "#d5c22a") + s("M3 14V9M8 14V9M13 14V9", "#222"),
    disk: s("M1 10l8-9v9z", K, "#ddd") + s("M1 11q6 4 13 0L9 7z", "#7a430c", "#e9b04c"),
    bbox: iso("#b1221a", "#8a1812", "#5d0f0b") + f("M0 4h9v10H0z", "#222") + t("B", 1, 13, 10, "#ffe92e"),
    pdf: s("M7 4h8v11H7z", "#aaa", W) + f("M0 0h13v5H0z", "#d8261d") + t("PDF", 1, 4.500, 5, "#fff") + s("M8 13q4-4 3-6 0 4 4 5", "#d8261d", "none", 1),
    cp: t("C", 1, 9, 10, "#e12a20") + t("P", 8, 14, 10, "#e12a20"),
    cbox: iso("#b1221a", "#c4492e", "#5d0f0b") + f("M1 4h12v10H1z", "#4a2c12") + t("CA", 1, 12, 9, "#e9d92e"),
    tree2: f("M0 0h16v16H0z", "#222") + f("M4 3h10v11H4z", "#e8eaec") + s("M7 4v8h5M7 8h4", "#222") + f("M9 3h3v2H9z", "#e12a20"),
    yline: f("M1 2h5l-2 3 2 3H1zM9 4h5v3H9zM2 11h12v3H2z", "#e8d22c") + s("M0 9h16M4 1v8M9 4h5M1 15h14", "#333"),
    book: book("#d7d9da") + s("M3 4h4v8H3zM9 4h4v8H9zM8 2v12", K, "none", 1),
    arrowy: s("M2 2l4 3M5 4l-3 5M7 7h5", "#d99c1c", Y, 3) + f("M9 6h6v5h-2l-2 3-2-4z", "#e0622a") + c(10, 10, 2, "#e8c22c", Y),
    chain: f("M0 0h16v16H0z", "#9b9da0") + c(9, 4, 2.500, "#6b5110", Y) + c(11, 11, 3, "#6b5110", Y) + s("M9 6L4 14M3 3l4 5", K, "none", 1.6),
    check: s("M3 8l3 5 6-11", "#1d9628", "none", 2),
    redchip: s("M1 1h14v14H1z", "#222", "#d3d4d6", 2) + f("M5 5h6v7H5z", "#d8261d") + s("M4 8h8M10 2l-3 6", "#222"),
    nodes: f("M0 0h16v16H0z", "#c4c9d4") + f("M2 2h3v3H2zM6 6h3v3H6zM3 11h3v3H3zM11 8h3v3h-3z", "#3d57a3") + s("M4 4v8M5 3h7", "#555", "none", 1),
    screen: f("M0 1h15v14H0z", "#0a0d22") + s("M3 8h4l2-2v4h4", "#2b3b7a"),
    zebra: c(8, 8, 6, "#222", "#eee") + s("M1 5q5-4 7-1t7-1M1 9q5-4 7-1t7-1M3 13q4-4 6-1t5-2", "#222", "none", 2),
    recycle: s("M6 2Q1 5 2 12", "#35b04a", "none", 2.4) + f("M4 0l5 1-3 4zM0 9l5 1-2 4z", "#35b04a") + s("M9 3q6 2 4 8l-4 3", "#e0432f", "none", 2.4) + f("M7 12l5-1-1 5z", "#e0432f"),
    props: s("M2 6h10v9H2z", K, "#e6e6e6") + s("M6 2h8v5H6z", K, "#9497c9") + s("M4 9h6M4 12h6", K),
    rgblist: s("M6 3h9M6 8h9M6 13h9", "#333", "none", 2) + f("M1 1h4v4H1z", "#d8261d") + f("M1 6h4v4H1z", "#8a2c7a") + f("M1 11h4v4H1z", "#2b8a36"),
    scale2: s("M1 2h14M8 2v12M2 14h12", "#2f6fb5", "none", 1.5) + f("M1 7h5v5H1zM10 7h5v5h-5z", "#dfa52b") + s("M3 2v5M12 2v5", B),
    dk: f("M0 1h15v14H0z", "#2d82d2") + t("DK", 2, 11, 8, "#fff"),
    checklist: s("M5 3h10M5 8h10M5 13h10", G, "none", 1.4) + s("M1 3l1 1 2-3M1 8l1 1 2-3M1 13l1 1 2-3", "#3a9a44", "none", 1),
    pc: f("M0 0h16v16H0z", "#90abc3") + s("M5 2h9v7H5z", "#24435f", "#c4d5e4") + s("M2 5v7h9M4 14h10", "#24435f"),
    molecule: `<g transform="translate(3) scale(.6)">${ball}</g>` + c(3, 12, 2, K, "#555") + c(13, 12, 2, K, "#357a3b") + c(8, 12, 2, K, "#d8342a"),
    xbig: s("M2 2l12 13M14 2L2 13", "#333", "none", 1.6),
    docfind: s("M2 1h9v14H2z", "#222", W, 1.500) + c(10, 8, 3, "#222", "#bbb") + s("M12 10l3 4", "#222", "none", 2),
    stop: f("M5 0h6l5 5v6l-5 5H5l-5-5V5z", "#e0291c") + s("M5 4v8M11 4L6 8l5 4", "#fff", "none", 2.4),
    lock: s("M5 8V4q3-5 6 0v4", G, "none", 1.6) + s("M3 7h10v8H3z", "#c7930f", "#ffd83a"),
    lock2: s("M5 8V4q3-5 6 0v4", "#bcae91", "none", 1.6) + s("M3 7h10v8H3z", "#c5a868", "#eed79c"),
    teal: f("M0 0h16v16H0z", "#1a8a93") + f("M2 4h8v3H2zM6 10h8v3H6z", "#d9eef0") + f("M10 2l4 3-4 3z", "#222"),
    qgreen: c(8, 8, 7, "#126b1c", "#229031") + t("?", 4.500, 13, 13, "#fff"),
    folder2: s("M1 13V3h5l1 2h6v3M1 13l3-5h11l-3 5z", "#7a5a10", "#f3cf5c"),
    yblocks: s("M1 3l5-2 3 3-5 3zM5 8l6-3 3 3-5 4zM8 13l5-2 2 2-4 3z", "#6a5210", "#f5d52f", 1),
    barrel: s("M3 3q5-3 10 0v10q-5 3-10 0z", "#5b3210", Y) + f("M3 6h10v4H3z", "#c8371e") + f("M8 6h5v4H8z", "#2f8a3a"),
    uclip: f("M0 0h16v16H0z", "#eceef3") + s("M4 1v9q4 6 8 0V1M7 1v9h2V1", "#4b4e7c", "none", 1.500),
    ring: c(8, 8, 6, "#555", "#a9abad", 2) + c(8, 8, 2.500, "#444", "#d8d8d8", 1.500),
    ring2: c(8, 8, 6, "#222", "#999", 2) + s("M3 3l10 10", "#111", "none", 3) + c(8, 8, 2.500, "#111", "#222"),
    shield: f("M1 3l10-2 4 4-2 8-5 2z", "#58aa3e") + f("M1 3l10-2-2 5-5 2z", "#de7a31") + f("M8 7h5l-3 5z", Y),
    floppy2: f("M1 1h14v14H1z", "#5551b5") + f("M4 1h8v7H4z", "#e8e8f6") + f("M5 10h6v5H5z", "#c9c8ec"),
    tag: s("M1 4l6-2 8 3v4l-5 5-8-4z", K, "#d5d8db") + c(5, 6, 1, K)
};

function drawIcon(name) {
    return `<svg viewBox="0 0 16 16" aria-hidden="true">${icons[name]}</svg>`;
}

// "|" is a separator, "v" a drop-down arrow, "*" marks pressed and "-" disabled
document.querySelectorAll("[data-icons]").forEach(bar => {
    bar.dataset.icons.split(" ").forEach(token => {
        const name = token.replace(/[*-]$/, "");
        if (name === "|") {
            const sep = document.createElement("span");
            sep.className = "sep";
            bar.appendChild(sep);
            return;
        }
        const button = document.createElement("button");
        button.className = name === "v" ? "drop" : "tool";
        button.setAttribute("aria-label", name === "v" ? "Altro" : name);
        if (token.endsWith("*")) button.classList.add("pressed");
        if (token.endsWith("-")) {
            button.classList.add("off");
            button.disabled = true;
        }
        if (name !== "v") button.innerHTML = drawIcon(name);
        bar.appendChild(button);
    });
});

document.querySelectorAll("[data-icon]").forEach(el => {
    el.innerHTML = drawIcon(el.dataset.icon);
});
```
